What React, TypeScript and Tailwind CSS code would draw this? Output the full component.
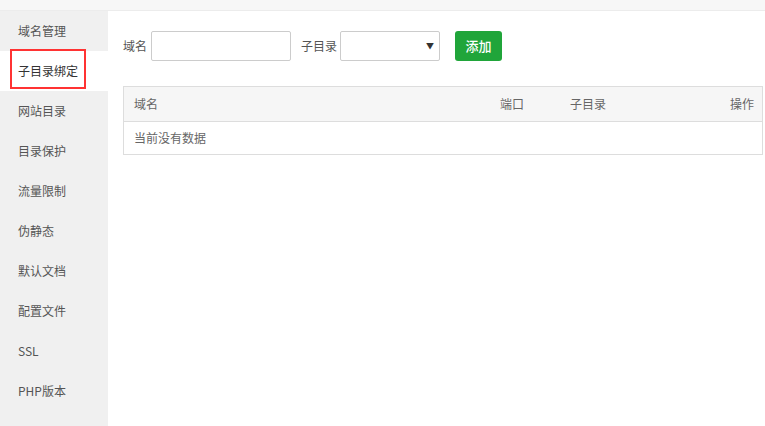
const menu = ['域名管理', '子目录绑定', '网站目录', '目录保护', '流量限制', '伪静态', '默认文档', '配置文件', 'SSL', 'PHP版本']

export default function App() {
  const active = 1
  return (
    <div
      className="flex h-[426px] w-[765px] flex-col overflow-hidden bg-white text-[12px] text-[#555]"
      style={{ fontFamily: '"Microsoft YaHei", "Noto Sans CJK SC", sans-serif' }}
    >
      {/* top strip */}
      <div className="h-[11px] shrink-0 border-b border-[#ececec] bg-[#f7f7f7]" />

      <div className="flex flex-1">
        {/* sidebar */}
        <div className="w-[108px] shrink-0 bg-[#f0f0f0]">
          {menu.map((m, i) => (
            <div
              key={m}
              className={`relative flex h-[40px] items-center pl-[18px] ${i === active ? 'bg-white text-[#333]' : ''}`}
            >
              {m}
              {i === active && (
                <div className="absolute left-[10px] top-[-2px] h-[40px] w-[76px] border-2 border-[#f33]" />
              )}
            </div>
          ))}
        </div>

        {/* main */}
        <div className="flex-1 pl-[15px] pr-[2px] pt-[20px]">
          <div className="flex h-[30px] items-center">
            <span className="mr-[4px]">域名</span>
            <input className="h-[30px] w-[140px] rounded-[2px] border border-[#ccc] bg-white outline-none" />
            <span className="ml-[10px] mr-[3px]">子目录</span>
            <div className="relative h-[30px] w-[100px] rounded-[2px] border border-[#ccc] bg-white">
              <span className="absolute right-[5px] top-[8px] text-[8px] text-[#333]">▼</span>
            </div>
            <button className="ml-[15px] h-[30px] w-[47px] rounded-[3px] bg-[#20a53a] text-[13px] font-medium text-white">
              添加
            </button>
          </div>

          <div className="mt-[25px] border border-[#ddd] text-[#666]">
            <div className="grid h-[34px] grid-cols-[376px_70px_1fr_auto] items-center bg-[#f6f6f6] pr-[8px]">
              <span className="pl-[10px]">域名</span>
              <span>端口</span>
              <span>子目录</span>
              <span>操作</span>
            </div>
            <div className="flex h-[33px] items-center border-t border-[#ddd] pl-[10px]">当前没有数据</div>
          </div>
        </div>
      </div>
    </div>
  )
}
